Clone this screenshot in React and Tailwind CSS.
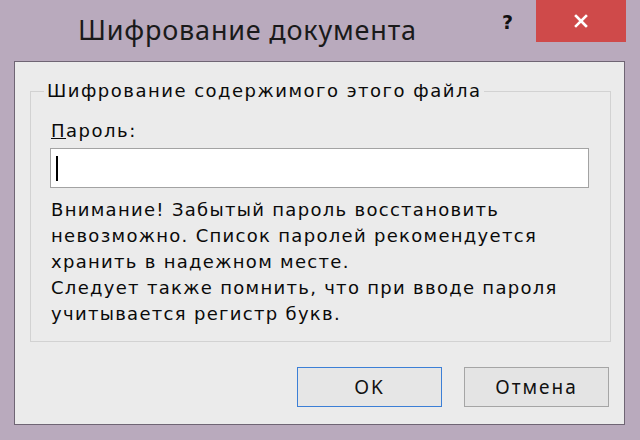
import React from "react";

const bodyFont = "font-['DejaVu_Sans','Liberation_Sans',sans-serif]";
const uiFont = "font-['Noto_Sans','Open_Sans',sans-serif]";

const CloseIcon = () => (
  <svg width="14" height="14" viewBox="0 0 14 14">
    <path d="M2 2 L12 12 M12 2 L2 12" stroke="#fff" strokeWidth="2.6" strokeLinecap="square" />
  </svg>
);

export default function App() {
  return (
    <div className="w-[640px] h-[440px] bg-[#b9aabd] flex flex-col overflow-hidden">
      {/* title bar */}
      <div className="h-[61px] flex items-start">
        <div className={`flex-1 pl-[78px] pt-[13px] text-[27px] leading-[34px] tracking-[0.8px] text-[#1a1a1a] ${uiFont}`}>
          Шифрование документа
        </div>
        <div className={`w-[12px] mr-[22px] pt-[11px] text-[19px] leading-[22px] font-bold text-[#111] ${bodyFont}`}>
          ?
        </div>
        <button className="w-[90px] h-[42px] mr-[14px] bg-[#cf4a4a] flex items-center justify-center">
          <CloseIcon />
        </button>
      </div>

      {/* client area */}
      <div className="ml-[14px] mr-[15px] h-[364px] border border-[#6f6574] bg-[#ebebeb] pl-[15px] pr-[13px] pt-[17px] flex flex-col">
        <fieldset className="h-[263px] border border-[#d2d2d2] pl-[20px] pr-[20px]">
          <legend className={`ml-[-7px] px-[3px] text-[18px] leading-[24px] tracking-[1.5px] text-[#0a0a0a] ${bodyFont}`}>
            Шифрование содержимого этого файла
          </legend>
          <div className={`mt-[16px] text-[18px] leading-[24px] tracking-[1.5px] text-[#0a0a0a] ${bodyFont}`}>
            <span className="underline">П</span>ароль:
          </div>
          <div className="mt-[5px] h-[40px] w-[539px] -ml-px border border-[#a3a3a3] bg-white flex items-center">
            <div className="ml-[5px] w-[2px] h-[25px] bg-black" />
          </div>
          <div className={`mt-[9px] text-[18px] leading-[26px] tracking-[1.3px] text-[#0a0a0a] ${bodyFont}`}>
            <p>Внимание! Забытый пароль восстановить</p>
            <p>невозможно. Список паролей рекомендуется</p>
            <p>хранить в надежном месте.</p>
            <p>Следует также помнить, что при вводе пароля</p>
            <p>учитывается регистр букв.</p>
          </div>
        </fieldset>

        <div className={`mt-[25px] pr-[2px] flex justify-end gap-[22px] text-[19px] tracking-[2px] text-[#111] ${uiFont}`}>
          <button className="w-[145px] h-[40px] border border-[#3c7fd6] bg-[#e6e6e6]">OK</button>
          <button className="w-[145px] h-[40px] border border-[#a5a5a5] bg-[#e4e4e4]">Отмена</button>
        </div>
      </div>
    </div>
  );
}
